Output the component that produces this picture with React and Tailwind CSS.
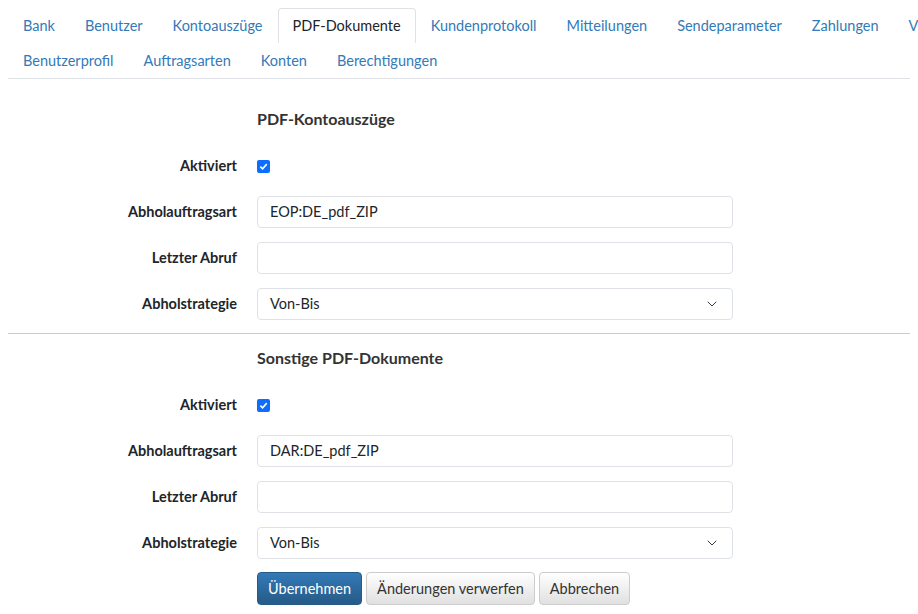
import { ChevronDown } from "lucide-react";

const row1 = ["Bank", "Benutzer", "Kontoauszüge", "PDF-Dokumente", "Kundenprotokoll", "Mitteilungen", "Sendeparameter", "Zahlungen", "VEU"];
const row2 = ["Benutzerprofil", "Auftragsarten", "Konten", "Berechtigungen"];

function Tab({ label, active }) {
  return (
    <div
      className={
        active
          ? "h-[35px] px-[14px] flex items-center whitespace-nowrap rounded-t border border-b-0 border-[#dee2e6] bg-white text-[#212529] -mb-px"
          : "h-[35px] px-[15px] flex items-center whitespace-nowrap text-[#337ab7]"
      }
    >
      {label}
    </div>
  );
}

function Row({ label, children }) {
  return (
    <div className="flex items-center h-8">
      <div className="w-[237px] text-right font-bold text-[#212529]">{label}</div>
      <div className="ml-5 w-[476px]">{children}</div>
    </div>
  );
}

function Input({ value }) {
  return (
    <div className="h-8 w-full rounded border border-[#dee2e6] bg-white px-3 flex items-center text-[#212529]">
      {value}
    </div>
  );
}

function Section({ title, code }) {
  return (
    <div>
      <div className="ml-[257px] h-5 flex items-center text-[16px] font-bold text-[#333]">{title}</div>
      <div className="mt-[21px] flex flex-col gap-[14px]">
        <Row label="Aktiviert">
          <div className="w-[13px] h-[13px] rounded-[2px] bg-[#0d6efd] flex items-center justify-center">
            <svg width="9" height="9" viewBox="0 0 10 10"><path d="M1.5 5.2 4 7.6 8.6 2.4" stroke="white" strokeWidth="1.8" fill="none" /></svg>
          </div>
        </Row>
        <Row label="Abholauftragsart"><Input value={code} /></Row>
        <Row label="Letzter Abruf"><Input value="" /></Row>
        <Row label="Abholstrategie">
          <div className="h-8 w-full rounded border border-[#dee2e6] bg-white pl-3 pr-3 flex items-center justify-between text-[#212529]">
            <span>Von-Bis</span>
            <ChevronDown size={16} strokeWidth={1.5} className="text-[#343a40]" />
          </div>
        </Row>
      </div>
    </div>
  );
}

export default function App() {
  return (
    <div className="w-[918px] h-[614px] bg-white text-[14.5px] overflow-hidden" style={{ fontFamily: "Lato, 'Noto Sans', sans-serif" }}>
      <div className="mx-2 border-b border-[#dee2e6]">
        <div className="flex pt-2">
          {row1.map((t) => <Tab key={t} label={t} active={t === "PDF-Dokumente"} />)}
        </div>
        <div className="flex">
          {row2.map((t) => <Tab key={t} label={t} />)}
        </div>
      </div>
      <div className="pt-[30px]">
        <Section title="PDF-Kontoauszüge" code="EOP:DE_pdf_ZIP" />
        <div className="mx-2 mt-[13px] mb-[14px] border-t border-[#ccc]" />
        <Section title="Sonstige PDF-Dokumente" code="DAR:DE_pdf_ZIP" />
        <div className="ml-[257px] mt-[13px] flex gap-1">
          <button className="h-[33px] px-[10px] rounded border border-[#265a88] text-white bg-gradient-to-b from-[#337ab7] to-[#265a88]">Übernehmen</button>
          <button className="h-[33px] px-[10px] rounded border border-[#ccc] text-[#333] bg-gradient-to-b from-white to-[#e0e0e0]">Änderungen verwerfen</button>
          <button className="h-[33px] px-[10px] rounded border border-[#ccc] text-[#333] bg-gradient-to-b from-white to-[#e0e0e0]">Abbrechen</button>
        </div>
      </div>
    </div>
  );
}
